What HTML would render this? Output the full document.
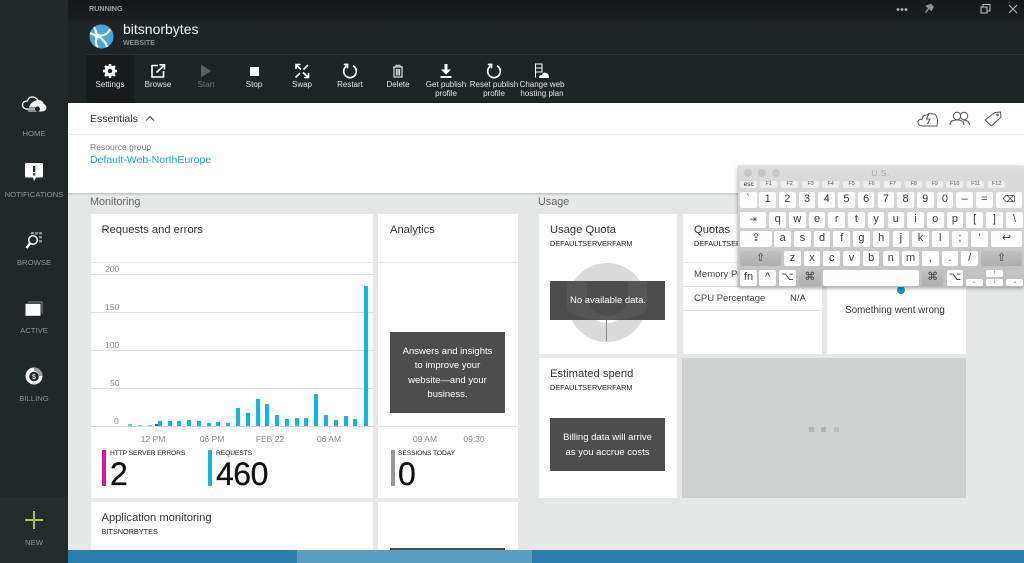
<!DOCTYPE html>
<html lang="en">
<head>
<meta charset="utf-8">
<title>bitsnorbytes</title>
<style>
html,body{margin:0;padding:0;width:1024px;height:563px;overflow:hidden;background:#e6e7e7}
body{position:relative;font-family:"Liberation Sans","DejaVu Sans",sans-serif;color:#333;filter:blur(.35px)}
div,svg{position:absolute}
.t{position:absolute;white-space:nowrap;line-height:14px;height:14px}
.c{transform:translateX(-50%);text-align:center}
.card{background:#fff}
.side{font-size:7.7px;color:#8f9394}
.tool{font-size:8px;color:#e4e5e5}
.title{font-size:11.2px;color:#333}
.sub{font-size:7.3px;color:#222}
.line{height:1px;background:#dfe0e0}
.ax{font-size:8.5px;color:#8b8b8b}
.leg{font-size:6.7px;color:#111;letter-spacing:-.1px}
.num{font-size:32px;line-height:36px;height:36px;color:#111;letter-spacing:-.5px;-webkit-text-stroke:.3px #111}
.bar{background:#0db7ee;width:4px}
.box{background:#4d4d4d}
.wt{font-size:9.5px;color:#fff}
.k{background:#fdfdfd;border-radius:2px;height:15.5px;width:16.7px;color:#3c3c3c;font-size:11px;line-height:15px;text-align:center;white-space:nowrap;overflow:hidden}
.g{background:linear-gradient(#c2c2c2,#aeaeae)}
.f{top:181px;height:7px;width:17.3px;background:#ececec;border-radius:2px;font-size:5.5px;line-height:7px;color:#666;text-align:center}
.a{height:7px;width:17px;font-size:6px;line-height:7px}
.r1{top:192px}.r2{top:212px}.r3{top:231px}.r4{top:250.5px}.r5{top:270px}
</style>
</head>
<body>

<!-- Top header -->
<div style="left:68px;top:0;width:956px;height:103px;background:linear-gradient(#16181a 0,#1a1d1f 18px,#1f2426 24px,#1f2426 100%)"></div>
<div style="left:86px;top:54px;width:938px;height:1px;background:#2e3234"></div>
<div style="left:86px;top:55px;width:48px;height:48px;background:#191c1e"></div>

<!-- Sidebar -->
<div style="left:0;top:0;width:68px;height:563px;background:#22272a"></div>
<div style="left:0;top:497px;width:68px;height:66px;background:#262b2d"></div>

<span class="t" style="left:89px;top:2px;font-size:7.2px;color:#a0a2a3;font-weight:700">RUNNING</span>
<span class="t" style="left:123px;top:22px;font-size:14px;color:#f4f4f4">bitsnorbytes</span>
<span class="t" style="left:123px;top:37px;font-size:7px;color:#8e9091;font-weight:700">WEBSITE</span>

<!-- Logo -->
<svg style="left:89px;top:24px" width="25" height="25" viewBox="0 0 25 25">
<circle cx="12.5" cy="12.5" r="12" fill="#4aa8d8"/>
<path d="M5 3Q9 10 7 16Q6 20 9 23M1 9Q9 13 15 11Q20 9 21 5M9 12Q14 15 17 20L18 23" fill="none" stroke="#f3f8fb" stroke-width="2.2"/>
<circle cx="8" cy="12" r="2.600" fill="#fff"/>
</svg>

<!-- Toolbar icons -->
<svg style="left:102px;top:63px" width="16" height="16" viewBox="0 0 16 16"><circle cx="8" cy="8" r="4" fill="none" stroke="#fff" stroke-width="3"/><path d="M8 1V15M1 8H15M3 3L13 13M13 3L3 13" stroke="#fff" stroke-width="2.4"/><circle cx="8" cy="8" r="2.2" fill="#1a1d1f"/></svg>
<svg style="left:150px;top:63px" width="16" height="16" viewBox="0 0 16 16" fill="none" stroke="#fff" stroke-width="1.6"><path d="M8 2.500H2V14H13.500V8"/><path d="M6.500 9.500L14 2.500M9.500 1.800H14.500V6.500"/></svg>
<svg style="left:199px;top:64px" width="14" height="14" viewBox="0 0 14 14"><path d="M2 0.500L12 7L2 13.500Z" fill="#5d6061"/></svg>
<div style="left:249.500px;top:67px;width:9px;height:9px;background:#fff"></div>
<svg style="left:294px;top:63px" width="16" height="16" viewBox="0 0 16 16" fill="none" stroke="#fff" stroke-width="1.6"><path d="M1.500 1.500L7 6.500M2 6V1.500H6.500"/><path d="M9 9.500L14.500 14.500M14.500 10V14.500H10"/><path d="M9.500 6.500L14 2M1.500 14.500L6 10"/></svg>
<svg style="left:342px;top:63px" width="16" height="16" viewBox="0 0 16 16" fill="none" stroke="#fff" stroke-width="1.7"><path d="M5 2.800A6.300 6.300 0 1 0 11 2.800"/><path d="M1.800 1.500H5.500V5.300"/></svg>
<svg style="left:391px;top:64px" width="14" height="14" viewBox="0 0 14 14" fill="none" stroke="#dcdcdc" stroke-width="1.200"><path d="M2 3H12M5 3V1.300H9V3M3 3V13H11V3M5.500 5V11.500M7 5V11.500M8.500 5V11.500"/></svg>
<svg style="left:438px;top:63px" width="16" height="16" viewBox="0 0 16 16" fill="#fff"><path d="M6.500 1H9.500V6.500H13L8 11.500L3 6.500H6.500Z"/><rect x="2.500" y="13" width="11" height="2"/></svg>
<svg style="left:486px;top:63px" width="16" height="16" viewBox="0 0 16 16" fill="none" stroke="#fff" stroke-width="1.700"><path d="M5 2.800A6.300 6.300 0 1 0 11 2.800"/><path d="M1.800 1.500H5.500V5.300"/></svg>
<svg style="left:534px;top:63px" width="16" height="16" viewBox="0 0 16 16"><g fill="none" stroke="#fff" stroke-width="1"><rect x="1.500" y="1" width="6.500" height="4"/><rect x="1.500" y="5" width="6.500" height="4"/><path d="M1.500 9V14.500"/></g><path d="M5 15Q5 11.500 8 12Q9 8.500 12 10Q15 10.500 15 15Z" fill="#fff"/></svg>

<span class="t tool c" style="left:110px;top:77.500px">Settings</span>
<span class="t tool c" style="left:158px;top:77.500px">Browse</span>
<span class="t tool c" style="left:206px;top:77.500px;color:#6f7273">Start</span>
<span class="t tool c" style="left:254px;top:77.500px">Stop</span>
<span class="t tool c" style="left:302px;top:77.500px">Swap</span>
<span class="t tool c" style="left:350px;top:77.500px">Restart</span>
<span class="t tool c" style="left:398px;top:77.500px">Delete</span>
<span class="t tool c" style="left:446px;top:77.500px">Get publish</span>
<span class="t tool c" style="left:446px;top:87px">profile</span>
<span class="t tool c" style="left:494px;top:77.500px">Reset publish</span>
<span class="t tool c" style="left:494px;top:87px">profile</span>
<span class="t tool c" style="left:542px;top:77.500px">Change web</span>
<span class="t tool c" style="left:542px;top:87px">hosting plan</span>

<!-- window controls -->
<svg style="left:893px;top:3px" width="128" height="13" viewBox="0 0 128 13">
<g fill="#b5b7b8"><circle cx="5" cy="6.500" r="1.400"/><circle cx="9" cy="6.500" r="1.400"/><circle cx="13" cy="6.500" r="1.400"/></g>
<path d="M33 2.500L39 7.500M36 5L32.500 9.500M34 3L38 1.500L40 4L38.500 6.500" stroke="#8f9192" stroke-width="1.500" fill="#8f9192"/>
<g fill="none" stroke="#b5b7b8" stroke-width="1.100"><rect x="88" y="4" width="6" height="6"/><path d="M90 4V1.500H97V8H94"/><path d="M116 2L124 10M124 2L116 10"/></g>
</svg>

<!-- Sidebar icons and labels -->
<svg style="left:21px;top:95px" width="27" height="19" viewBox="0 0 27 19">
<path d="M17 5Q14 1.500 10.500 2Q7 2.500 6.500 6Q2 6 1.500 9.500Q1.500 13 5 14H14" fill="none" stroke="#fff" stroke-width="1.300"/>
<path d="M17 5Q22 5 22.500 9Q25.500 10 25.500 13Q25 16 21 16.500H9Q7 16.500 6.500 15.500H14.500A2.500 2.500 0 1 0 14.500 12.500H8Q10 6 17 5Z" fill="#fff"/>
</svg>
<span class="t side c" style="left:34px;top:127px">HOME</span>

<svg style="left:25px;top:163px" width="18" height="19" viewBox="0 0 18 19"><path d="M1.500 0H16.500Q18 0 18 1.500V13Q18 14.500 16.500 14.500H11L9 18L8 14.500H1.500Q0 14.500 0 13V1.500Q0 0 1.500 0Z" fill="#fff"/><rect x="8" y="3" width="2.200" height="6" fill="#22272a"/><rect x="8" y="10.200" width="2.200" height="2.200" fill="#22272a"/></svg>
<span class="t side c" style="left:34px;top:188px">NOTIFICATIONS</span>

<svg style="left:25px;top:231px" width="18" height="19" viewBox="0 0 18 19">
<g fill="#8e9192"><rect x="6" y="1" width="3" height="2.500"/><rect x="10" y="1" width="3" height="2.500"/><rect x="14" y="1" width="3" height="2.500"/><rect x="14" y="5" width="3" height="2.500"/><rect x="14" y="9" width="3" height="2.500"/></g>
<circle cx="8" cy="9" r="4.300" fill="#22272a" stroke="#fff" stroke-width="1.500"/><path d="M5 12.500L1.500 17" stroke="#fff" stroke-width="2.400"/></svg>
<span class="t side c" style="left:34px;top:256px">BROWSE</span>

<svg style="left:25px;top:301px" width="18" height="16" viewBox="0 0 18 16"><path d="M3 1H17V13" fill="none" stroke="#7f8283" stroke-width="1"/><rect x="0.500" y="2.800" width="15" height="12" fill="#fff"/></svg>
<span class="t side c" style="left:34px;top:324px">ACTIVE</span>

<svg style="left:25px;top:367px" width="18" height="18" viewBox="0 0 18 18"><circle cx="9" cy="9" r="8.500" fill="#fff"/><path d="M9 .500A8.500 8.500 0 0 1 17.500 9H14A5 5 0 0 0 9 4Z" fill="#9a9d9e"/><circle cx="9" cy="9.500" r="4.800" fill="#22272a"/><text x="9" y="12" text-anchor="middle" font-size="7" font-weight="700" fill="#ddd" font-family="Liberation Sans">$</text></svg>
<span class="t side c" style="left:34px;top:392px">BILLING</span>

<svg style="left:25px;top:511px" width="18" height="18" viewBox="0 0 18 18"><path d="M9 0V18M0 9H18" stroke="#a5c63b" stroke-width="2"/></svg>
<span class="t side c" style="left:34px;top:536px">NEW</span>

<!-- Essentials -->
<div style="left:68px;top:103px;width:956px;height:90px;background:#fff;box-shadow:0 1px 2px rgba(0,0,0,.2)"></div>
<div style="left:68px;top:134px;width:956px;height:1px;background:#eceded"></div>
<span class="t" style="left:90px;top:112px;font-size:10.500px;color:#333">Essentials</span>
<svg style="left:145px;top:115px" width="10" height="7" viewBox="0 0 10 7"><path d="M1 5.500L5 1.500L9 5.500" fill="none" stroke="#444" stroke-width="1"/></svg>
<span class="t" style="left:90px;top:140px;font-size:8.600px;color:#777">Resource group</span>
<span class="t" style="left:90px;top:153px;font-size:10.500px;color:#1ba6dd">Default-Web-NorthEurope</span>

<svg style="left:917px;top:110px" width="88" height="18" viewBox="0 0 88 18" fill="none" stroke="#555" stroke-width="1">
<path d="M5 16Q.500 15.500 1 12Q1.500 9 5 9.500Q6 4 11 5Q13 2 15 4Q19 3 20 8Q21 9.500 20 16Z"/>
<path d="M12 3L9.500 9H13L10.500 14" />
<circle cx="40" cy="6" r="3.700"/><path d="M33 15Q33 10 40 10Q47 10 47 15"/>
<circle cx="47" cy="6" r="3.700"/><path d="M46 10Q52 10 52.500 15"/>
<path d="M68 10L78 2.500L83.500 2L84 7L74.500 16Z"/><circle cx="80.500" cy="4.800" r=".8"/>
</svg>

<!-- Section labels -->
<span class="t" style="left:90px;top:195px;font-size:10.800px;color:#666">Monitoring</span>
<span class="t" style="left:538px;top:195px;font-size:10.800px;color:#666">Usage</span>

<!-- Requests card -->
<div class="card" style="left:91px;top:214px;width:282px;height:284px"></div>
<span class="t title" style="left:101.500px;top:223px">Requests and errors</span>
<div class="line" style="left:91px;top:262px;width:282px;background:#e8e8e8"></div>
<div class="line" style="left:91px;top:274px;width:282px"></div>
<div class="line" style="left:91px;top:312px;width:282px"></div>
<div class="line" style="left:91px;top:350px;width:282px"></div>
<div class="line" style="left:91px;top:388px;width:282px"></div>
<div class="line" style="left:91px;top:426px;width:282px;background:#d5d6d6"></div>
<div class="line" style="left:153px;top:427px;width:1px;height:2px"></div>
<div class="line" style="left:212px;top:427px;width:1px;height:2px"></div>
<div class="line" style="left:270px;top:427px;width:1px;height:2px"></div>
<div class="line" style="left:329px;top:427px;width:1px;height:2px"></div>
<span class="t ax" style="left:105px;top:262px">200</span>
<span class="t ax" style="left:105px;top:300px">150</span>
<span class="t ax" style="left:105px;top:338px">100</span>
<span class="t ax" style="left:110px;top:376px">50</span>
<span class="t ax" style="left:114px;top:414px">0</span>

<div class="bar" style="left:128px;top:424px;height:2px;opacity:.7"></div>
<div class="bar" style="left:138px;top:425px;height:1px;opacity:.6"></div>
<div class="bar" style="left:148px;top:425px;height:1px;opacity:.6"></div>
<div class="bar" style="left:155px;top:424px;height:2px;width:3px;background:#e0138c"></div>
<div class="bar" style="left:158px;top:421px;height:5px"></div>
<div class="bar" style="left:168px;top:421px;height:5px"></div>
<div class="bar" style="left:177px;top:421px;height:5px"></div>
<div class="bar" style="left:187px;top:420px;height:6px"></div>
<div class="bar" style="left:197px;top:421px;height:5px"></div>
<div class="bar" style="left:207px;top:423px;height:3px"></div>
<div class="bar" style="left:216px;top:422px;height:4px"></div>
<div class="bar" style="left:226px;top:423px;height:3px"></div>
<div class="bar" style="left:236px;top:408px;height:18px"></div>
<div class="bar" style="left:246px;top:413px;height:13px"></div>
<div class="bar" style="left:256px;top:399px;height:27px"></div>
<div class="bar" style="left:265px;top:404px;height:22px"></div>
<div class="bar" style="left:275px;top:415px;height:11px"></div>
<div class="bar" style="left:285px;top:419px;height:7px"></div>
<div class="bar" style="left:295px;top:418px;height:8px"></div>
<div class="bar" style="left:304px;top:418px;height:8px"></div>
<div class="bar" style="left:314px;top:394px;height:32px"></div>
<div class="bar" style="left:324px;top:415px;height:11px"></div>
<div class="bar" style="left:334px;top:420px;height:6px"></div>
<div class="bar" style="left:344px;top:416px;height:10px"></div>
<div class="bar" style="left:353px;top:419px;height:7px"></div>
<div class="bar" style="left:364px;top:286px;height:140px"></div>

<span class="t ax c" style="left:153px;top:432px">12 PM</span>
<span class="t ax c" style="left:212px;top:432px">06 PM</span>
<span class="t ax c" style="left:270px;top:432px">FEB 22</span>
<span class="t ax c" style="left:329px;top:432px">06 AM</span>

<div style="left:102px;top:450px;width:4px;height:36px;background:#e5128f"></div>
<span class="t leg" style="left:110px;top:447px">HTTP SERVER ERRORS</span>
<span class="t num" style="left:110px;top:456px">2</span>
<div style="left:208px;top:450px;width:4px;height:36px;background:#0db7ee"></div>
<span class="t leg" style="left:216px;top:447px">REQUESTS</span>
<span class="t num" style="left:216px;top:456px">460</span>

<!-- Analytics card -->
<div class="card" style="left:378px;top:214px;width:140px;height:284px"></div>
<span class="t title" style="left:390px;top:223px">Analytics</span>
<div class="line" style="left:378px;top:262px;width:140px;background:#e8e8e8"></div>
<div class="line" style="left:378px;top:426px;width:140px;background:#e6e6e6"></div>
<div class="box" style="left:390px;top:332px;width:115px;height:81px"></div>
<span class="t wt c" style="left:447.500px;top:345px">Answers and insights</span>
<span class="t wt c" style="left:447.500px;top:359px">to improve your</span>
<span class="t wt c" style="left:447.500px;top:374px">website—and your</span>
<span class="t wt c" style="left:447.500px;top:388px">business.</span>
<span class="t ax c" style="left:425px;top:432px">09 AM</span>
<span class="t ax c" style="left:474px;top:432px">09:30</span>
<div style="left:391px;top:450px;width:4px;height:36px;background:#999"></div>
<span class="t leg" style="left:398px;top:447px">SESSIONS TODAY</span>
<span class="t num" style="left:398px;top:456px">0</span>

<!-- Lower row -->
<div class="card" style="left:91px;top:502px;width:282px;height:48px"></div>
<span class="t title" style="left:101.500px;top:511px">Application monitoring</span>
<span class="t sub" style="left:101.500px;top:525px">BITSNORBYTES</span>
<div class="card" style="left:378px;top:502px;width:140px;height:48px"></div>
<div class="box" style="left:390px;top:548px;width:115px;height:2px"></div>

<!-- Usage Quota -->
<div class="card" style="left:539px;top:214px;width:138px;height:140px"></div>
<span class="t title" style="left:550px;top:223px">Usage Quota</span>
<span class="t sub" style="left:550px;top:237px">DEFAULTSERVERFARM</span>
<svg style="left:560px;top:258px" width="110" height="90" viewBox="0 0 110 90">
<circle cx="47" cy="44.500" r="30" fill="none" stroke="#dadada" stroke-width="19"/>
<path d="M46.500 62V83" stroke="#8d8d8d" stroke-width="1"/>
</svg>
<div style="left:550px;top:281px;width:115px;height:39px;background:#4d4d4d"></div>
<div style="left:567px;top:281px;width:80px;height:39px;background:#555;border-radius:0 0 40px 40px/0 0 12px 12px"></div>
<div style="left:587px;top:281px;width:41px;height:35px;background:#4d4d4d;border-radius:0 0 21px 21px"></div>
<span class="t wt c" style="left:608px;top:294px">No available data.</span>

<!-- Estimated spend -->
<div class="card" style="left:539px;top:358px;width:138px;height:140px"></div>
<span class="t title" style="left:550px;top:367px">Estimated spend</span>
<span class="t sub" style="left:550px;top:381px">DEFAULTSERVERFARM</span>
<div class="box" style="left:550px;top:418px;width:115px;height:53px"></div>
<span class="t wt c" style="left:607.500px;top:431px">Billing data will arrive</span>
<span class="t wt c" style="left:607.500px;top:446px">as you accrue costs</span>

<!-- Quotas -->
<div class="card" style="left:683px;top:214px;width:139px;height:140px"></div>
<span class="t title" style="left:694px;top:223px">Quotas</span>
<span class="t sub" style="left:694px;top:237px">DEFAULTSERVERFARM</span>
<div class="line" style="left:683px;top:262px;width:139px;background:#e8e8e8"></div>
<div class="line" style="left:683px;top:286px;width:139px"></div>
<div class="line" style="left:683px;top:310px;width:139px"></div>
<span class="t" style="left:694px;top:268px;font-size:9.500px;color:#444">Memory Percentage</span>
<span class="t" style="left:694px;top:292px;font-size:9.500px;color:#444">CPU Percentage</span>
<span class="t" style="left:790px;top:292px;font-size:9.500px;color:#444">N/A</span>

<!-- Something went wrong -->
<div class="card" style="left:827px;top:214px;width:139px;height:140px"></div>
<div style="left:897px;top:286px;width:8px;height:8px;border-radius:50%;background:#0f9bd7"></div>
<span class="t c" style="left:895px;top:304px;font-size:9.800px;color:#333">Something went wrong</span>

<!-- grey loading tile -->
<div style="left:682px;top:358px;width:284px;height:140px;background:#cfd0d0"></div>
<div style="left:809px;top:427px;width:5px;height:5px;background:#b3b4b6"></div>
<div style="left:821px;top:427px;width:5px;height:5px;background:#b3b4b6"></div>
<div style="left:834px;top:427px;width:5px;height:5px;background:#bcbdbf"></div>

<!-- bottom bar -->
<div style="left:68px;top:550px;width:956px;height:13px;background:#2b7fab"></div>
<div style="left:297px;top:550px;width:235px;height:13px;background:#5b9dc1"></div>

<!-- Keyboard -->
<div style="left:738px;top:166px;width:286px;height:121px;background:linear-gradient(#dcdcdc 0,#d4d4d4 40%,#c4c4c4 85%,#bcbcbc 100%);box-shadow:0 1px 4px rgba(0,0,0,.4)"></div>
<div style="left:744px;top:169px;width:8px;height:8px;border-radius:50%;background:#c6c6c6"></div>
<div style="left:758px;top:169px;width:8px;height:8px;border-radius:50%;background:#c6c6c6"></div>
<div style="left:772px;top:169px;width:8px;height:8px;border-radius:50%;background:#c6c6c6"></div>
<span class="t c" style="left:880.500px;top:166px;font-size:8.500px;color:#a8a8a8;letter-spacing:.5px">U.S.</span>

<div class="f" style="left:740px;font-size:6.500px;color:#333">esc</div>
<div class="f" style="left:760px">F1</div><div class="f" style="left:781px">F2</div><div class="f" style="left:802px">F3</div><div class="f" style="left:822px">F4</div>
<div class="f" style="left:843px">F5</div><div class="f" style="left:863px">F6</div><div class="f" style="left:884px">F7</div><div class="f" style="left:905px">F8</div>
<div class="f" style="left:926px">F9</div><div class="f" style="left:946px">F10</div><div class="f" style="left:967px">F11</div><div class="f" style="left:988px">F12</div>

<div class="k r1" style="left:739.500px;width:17px">`</div>
<div class="k r1" style="left:759.300px">1</div><div class="k r1" style="left:779px">2</div><div class="k r1" style="left:798.700px">3</div><div class="k r1" style="left:818.400px">4</div><div class="k r1" style="left:838.100px">5</div><div class="k r1" style="left:857.800px">6</div><div class="k r1" style="left:877.500px">7</div><div class="k r1" style="left:897.200px">8</div><div class="k r1" style="left:916.900px">9</div><div class="k r1" style="left:936.600px">0</div><div class="k r1" style="left:956.300px">–</div><div class="k r1" style="left:976px">=</div><div class="k r1" style="left:996px;width:26px;font-size:9px">⌫</div>

<div class="k r2" style="left:740px;width:26px;font-size:9px">⇥</div>
<div class="k r2" style="left:769.300px">q</div><div class="k r2" style="left:789px">w</div><div class="k r2" style="left:808.700px">e</div><div class="k r2" style="left:828.400px">r</div><div class="k r2" style="left:848.100px">t</div><div class="k r2" style="left:867.800px">y</div><div class="k r2" style="left:887.500px">u</div><div class="k r2" style="left:907.200px">i</div><div class="k r2" style="left:926.900px">o</div><div class="k r2" style="left:946.600px">p</div><div class="k r2" style="left:966.300px">[</div><div class="k r2" style="left:986px">]</div><div class="k r2" style="left:1006px;width:17px">\</div>

<div class="k r3" style="left:740px;width:32px">⇪</div>
<div class="k r3" style="left:774.300px">a</div><div class="k r3" style="left:794px">s</div><div class="k r3" style="left:813.700px">d</div><div class="k r3" style="left:833.400px">f</div><div class="k r3" style="left:853.100px">g</div><div class="k r3" style="left:872.800px">h</div><div class="k r3" style="left:892.500px">j</div><div class="k r3" style="left:912.200px">k</div><div class="k r3" style="left:931.900px">l</div><div class="k r3" style="left:951.600px">;</div><div class="k r3" style="left:971.300px">'</div><div class="k r3" style="left:991px;width:31px">↩</div>

<div class="k r4 g" style="left:740px;width:41px">⇧</div>
<div class="k r4" style="left:784px">z</div><div class="k r4" style="left:803.700px">x</div><div class="k r4" style="left:823.400px">c</div><div class="k r4" style="left:843.100px">v</div><div class="k r4" style="left:862.800px">b</div><div class="k r4" style="left:882.500px">n</div><div class="k r4" style="left:902.200px">m</div><div class="k r4" style="left:921.900px">,</div><div class="k r4" style="left:941.600px">.</div><div class="k r4" style="left:961.300px">/</div>
<div class="k r4 g" style="left:981px;width:41px">⇧</div>

<div class="k r5" style="left:740px;width:17px">fn</div>
<div class="k r5" style="left:759.300px">^</div>
<div class="k r5" style="left:779.300px">⌥</div>
<div class="k r5 g" style="left:799px;width:21.700px">⌘</div>
<div class="k r5" style="left:823.300px;width:96px"></div>
<div class="k r5 g" style="left:922px;width:21.300px">⌘</div>
<div class="k r5" style="left:946.700px">⌥</div>
<div class="k a" style="left:966px;top:279px">←</div>
<div class="k a" style="left:986px;top:270px">↑</div>
<div class="k a" style="left:986px;top:279px">↓</div>
<div class="k a" style="left:1006px;top:279px">→</div>

</body>
</html>
